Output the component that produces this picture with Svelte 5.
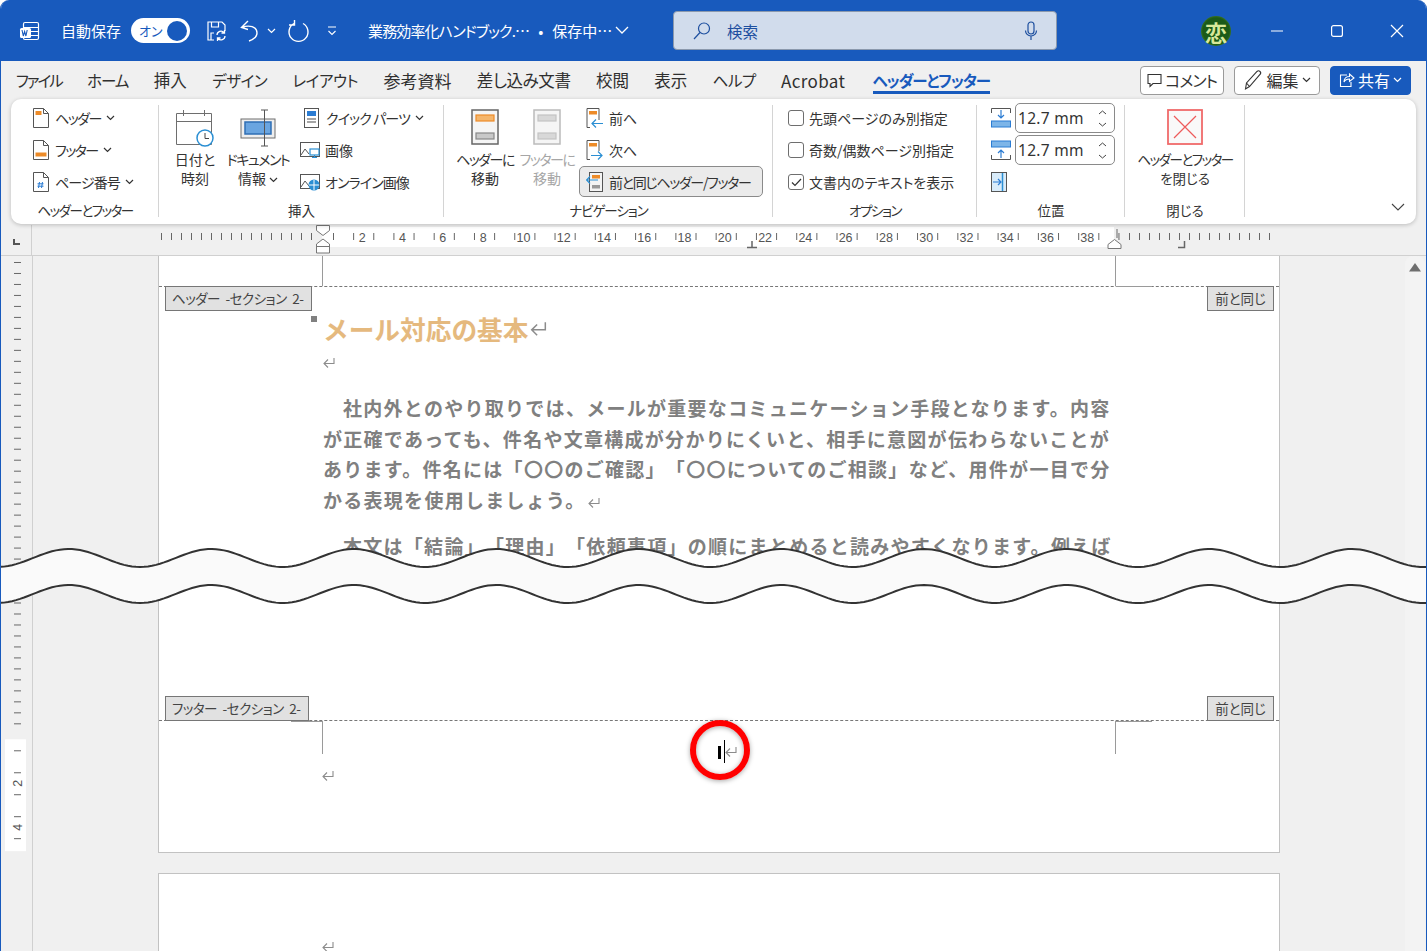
<script>
	// label, font size and tracking for each ribbon tab
	const tabs = [
		{ label: 'ファイル', size: 15.5, track: -2 },
		{ label: 'ホーム', size: 15.5, track: -1 },
		{ label: '挿入', size: 16.5, track: 0 },
		{ label: 'デザイン', size: 15.5, track: -0.5 },
		{ label: 'レイアウト', size: 15.5, track: -0.4 },
		{ label: '参考資料', size: 17, track: 0 },
		{ label: '差し込み文書', size: 16.5, track: -0.4 },
		{ label: '校閲', size: 16.5, track: 0 },
		{ label: '表示', size: 16.5, track: 0 },
		{ label: 'ヘルプ', size: 15.5, track: -0.5 },
		{ label: 'Acrobat', size: 17, track: 0.35 }
	];

	// horizontal ruler
	const greyTicks = [];
	for (let x = 160; x <= 312; x += 10) greyTicks.push(x);
	for (let x = 1128; x <= 1270; x += 10) greyTicks.push(x);
	const whiteTicks = [];
	for (let k = 0; k < 40; k++) whiteTicks.push(332.5 + k * 20.14);
	const numbers = [];
	for (let n = 2; n <= 38; n += 2) numbers.push(n);

	// vertical ruler
	const vTicks = [];
	for (let y = 6; y <= 473; y += 11) vTicks.push(y);
	const vWhiteTicks = [495, 517, 539, 561, 583];

	// wavy cut across the page
	function wave(base, from = 0, to = 1430) {
		let pts = [];
		for (let x = from; x <= to; x += 4) {
			const y = base + 9 * Math.cos(((x - 140) / 142.55) * 2 * Math.PI);
			pts.push(`${x} ${y.toFixed(2)}`);
		}
		return pts;
	}
	const top = wave(19);
	const bottom = wave(55);
	const bandPath = 'M' + top.join(' L') + ' L' + bottom.slice().reverse().join(' L') + ' Z';
	const topPath = 'M' + top.join(' L');
	const bottomPath = 'M' + bottom.join(' L');
</script>

{#snippet chev(cls = '')}
	<svg class="chev {cls}" width="9" height="6" viewBox="0 0 9 6"><path d="M1 1l3.500 3.500L8 1" fill="none" stroke="currentColor" stroke-width="1.200" /></svg>
{/snippet}

{#snippet ret()}
	<svg class="ret" viewBox="0 0 12 11"><path d="M11 1v5.500H1.500M5 2.500L1 6.500l4 4" fill="none" stroke="#8c8c8c" stroke-width="1.100" /></svg>
{/snippet}

<div class="window">
	<header class="titlebar">
		<svg class="word" width="22" height="22" viewBox="0 0 22 22">
			<path d="M6 2.500h12a1.500 1.500 0 0 1 1.500 1.500v14a1.500 1.500 0 0 1-1.500 1.500H6A1.500 1.500 0 0 1 4.500 18V4A1.500 1.500 0 0 1 6 2.500zM4.500 7.500h15M12 11.500h7.500M12 15.500h7.500" fill="none" stroke="#fff" stroke-width="1.200" />
			<rect x="1" y="8" width="11" height="10" rx="1.500" fill="#fff" />
			<path d="M3 10l1.300 6 1.300-4.500L6.900 16l1.300-6" fill="none" stroke="#185abd" stroke-width="1.100" />
		</svg>
		<span class="autosave">自動保存</span>
		<div class="toggle"><span>オン</span><i></i></div>
		<svg class="qat-save" width="22" height="22" viewBox="0 0 22 22" fill="none" stroke="#fff" stroke-width="1.200">
			<path d="M9 20H3V2h14l3 3v6M6.500 2v5h7V2M6 20v-7h3" />
			<path d="M12 15a4 4 0 0 1 7-2.500M20 16a4 4 0 0 1-7 2.500M19.500 10v3h-3M12.500 21v-3h3" stroke-width="1.300" />
		</svg>
		<svg class="qat-undo" width="22" height="24" viewBox="0 0 22 24" fill="none" stroke="#fff" stroke-width="1.400">
			<path d="M9 2L2.500 8.500 9 10.500M3 8.500c7-3 15-1 15 5.500 0 4-3.500 6.500-8 8" />
		</svg>
		<span class="undo-chev">{@render chev()}</span>
		<svg class="qat-redo" width="24" height="24" viewBox="0 0 24 24" fill="none" stroke="#fff" stroke-width="1.400">
			<path d="M8 4.500a9.500 9.500 0 1 0 9 0M8.500 1v5H3" />
		</svg>
		<svg class="qat-more" width="10" height="10" viewBox="0 0 10 10" fill="none" stroke="#fff" stroke-width="1.100">
			<path d="M1 1h8M1.500 5l3.500 3.500L8.500 5" />
		</svg>
		<div class="doc-title"><span class="doc-name">業務効率化ハンドブック.…</span><span>•</span><span>保存中…</span></div>
		<svg class="title-chev" width="14" height="9" viewBox="0 0 14 9"><path d="M1 1l6 6 6-6" fill="none" stroke="#fff" stroke-width="1.300" /></svg>
		<div class="search">
			<svg width="20" height="20" viewBox="0 0 20 20" fill="none" stroke="#1d4f9f" stroke-width="1.200"><circle cx="12" cy="7.500" r="5.500" /><path d="M8 11.500L2 18" /></svg>
			<span>検索</span>
			<svg class="mic" width="14" height="20" viewBox="0 0 14 20" fill="none" stroke="#1d4f9f" stroke-width="1.200"><rect x="4" y="1" width="6" height="12" rx="3" /><path d="M1.500 9.500a5.500 5.500 0 0 0 11 0M7 15v4" /></svg>
		</div>
		<div class="avatar">恋</div>
		<div class="winctl">
			<svg width="12" height="12" viewBox="0 0 12 12"><path d="M0 6h12" stroke="#fff" stroke-width="1.200" /></svg>
			<svg width="12" height="12" viewBox="0 0 12 12"><rect x="0.600" y="0.600" width="10.800" height="10.800" rx="2" fill="none" stroke="#fff" stroke-width="1.200" /></svg>
			<svg width="14" height="14" viewBox="0 0 14 14"><path d="M1 1l12 12M13 1L1 13" stroke="#fff" stroke-width="1.200" /></svg>
		</div>
	</header>

	<nav class="menubar">
		{#each tabs as tab}
			<span class="tab" style="font-size: {tab.size}px; letter-spacing: {tab.track}px">{tab.label}</span>
		{/each}
		<span class="tab active">ヘッダーとフッター</span>
		<div class="actions">
			<button class="act comment">
				<svg width="15" height="15" viewBox="0 0 15 15"><path d="M1 1.500h13v9H6l-3 3v-3H1z" fill="none" stroke="#333" stroke-width="1.100" /></svg>
				<span>コメント</span>
			</button>
			<button class="act edit">
				<svg width="20" height="22" viewBox="0 0 20 22" fill="none" stroke="#333" stroke-width="1.100"><path d="M2.500 20l1-6L14 2.500a2 2 0 0 1 3 3L6.500 17.500zM3.500 14l3 3.500" /></svg>
				編集
				{@render chev()}
			</button>
			<button class="act share">
				<svg width="16" height="16" viewBox="0 0 16 16" fill="none" stroke="#fff" stroke-width="1.100"><path d="M8 3H1.500v11.500H12V10M5 10c0-4 3-5.500 5.500-5.500V2L15 6l-4.500 3.500V7C8 7 6 8 5 10z" /></svg>
				共有
				{@render chev()}
			</button>
		</div>
	</nav>

	<section class="ribbon">
		<div class="group g-hf">
			<div class="group-body col">
				<div class="item">
					<svg width="16" height="20" viewBox="0 0 16 20"><path d="M.5.500h10l5 5v14H.5z" fill="#fff" stroke="#555" /><path d="M10.500.500v5h5" fill="none" stroke="#555" /><rect x="2.500" y="3" width="6" height="4" fill="#ed8b28" /></svg>
					<span class="tight">ヘッダー</span>{@render chev()}
				</div>
				<div class="item">
					<svg width="16" height="20" viewBox="0 0 16 20"><path d="M.5.500h10l5 5v14H.5z" fill="#fff" stroke="#555" /><path d="M10.500.500v5h5" fill="none" stroke="#555" /><rect x="2.500" y="12.500" width="11" height="4" fill="#ed8b28" /></svg>
					<span class="tight">フッター</span>{@render chev()}
				</div>
				<div class="item">
					<svg width="16" height="20" viewBox="0 0 16 20"><path d="M.5.500h10l5 5v14H.5z" fill="#fff" stroke="#555" /><path d="M10.500.500v5h5" fill="none" stroke="#555" /><path d="M6.500 10l-1 6M9.500 10l-1 6M4.500 11.800h6M4.500 14.200h6" stroke="#2b7cd3" stroke-width="1" /></svg>
					<span class="snug">ページ番号</span>{@render chev()}
				</div>
			</div>
			<div class="group-label tight">ヘッダーとフッター</div>
		</div>

		<div class="group g-insert">
			<div class="group-body row">
				<div class="big date">
					<svg width="38" height="38" viewBox="0 0 38 38" fill="none" stroke="#6e6e6e">
						<path d="M.5 4.500h35v31H.5zM.5 12.500h35M7.500 1v6M28.500 1v6" />
						<circle cx="29" cy="29" r="8" fill="#fff" stroke="#2b8fd3" stroke-width="1.500" />
						<path d="M29 24v5.500h4" stroke="#444" />
					</svg>
					<span>日付と<br />時刻</span>
				</div>
				<div class="big docinfo">
					<svg width="36" height="38" viewBox="0 0 36 38" fill="none" stroke="#6e6e6e">
						<rect x="1" y="10" width="34" height="19" fill="#eee" />
						<rect x="5" y="13" width="26" height="12" fill="#6aa5e0" stroke="#2f6fb5" stroke-width="1.500" />
						<path d="M21 1h7M21 37h7M24.500 1v36" stroke="#555" />
					</svg>
					<span><b class="tight">ドキュメント</b><br />情報 {@render chev()}</span>
				</div>
				<div class="col small-col">
					<div class="item">
						<svg width="16" height="20" viewBox="0 0 16 20"><rect x=".5" y=".5" width="14" height="19" fill="#fff" stroke="#555" /><rect x="3" y="3" width="9" height="5" fill="#2b7cd3" /><path d="M3 11h9M3 14h9" stroke="#888" stroke-width="1.500" /></svg>
						<span class="snug">クイック パーツ</span>{@render chev()}
					</div>
					<div class="item wide">
						<svg width="20" height="16" viewBox="0 0 20 16" fill="none"><rect x=".5" y=".5" width="19" height="14" stroke="#555" /><path d="M1 13l4-6 4 5" stroke="#555" /><rect x="10" y="7" width="9" height="6" fill="#fff" stroke="#2b8fd3" stroke-width="1.200" /><path d="M14.500 13v2.500M12 15.500h5" stroke="#2b8fd3" /></svg>
						<span>画像</span>
					</div>
					<div class="item wide">
						<svg width="20" height="17" viewBox="0 0 20 17" fill="none"><rect x=".5" y=".5" width="19" height="14" stroke="#555" /><path d="M1 13l4-6 4 5" stroke="#555" /><circle cx="14" cy="11" r="5.500" fill="#2b8fd3" /><path d="M9 11h10M14 6v10" stroke="#fff" /></svg>
						<span class="snug">オンライン画像</span>
					</div>
				</div>
			</div>
			<div class="group-label">挿入</div>
		</div>

		<div class="group g-nav">
			<div class="group-body row">
				<div class="big gotohead">
					<svg width="28" height="36" viewBox="0 0 28 36"><rect x="1" y="1" width="26" height="34" fill="#f5f5f5" stroke="#666" stroke-width="1.500" /><rect x="5" y="6" width="18" height="6" fill="#f5b66c" stroke="#ed8b28" stroke-width="1.200" /><rect x="5" y="24" width="18" height="6" fill="#c8c8c8" stroke="#888" stroke-width="1.200" /></svg>
					<span><b class="tight">ヘッダーに</b><br />移動</span>
				</div>
				<div class="big gotofoot disabled">
					<svg width="28" height="36" viewBox="0 0 28 36"><rect x="1" y="1" width="26" height="34" fill="#f5f5f5" stroke="#bbb" stroke-width="1.500" /><rect x="5" y="6" width="18" height="6" fill="#d8d8d8" stroke="#c4c4c4" stroke-width="1.200" /><rect x="5" y="24" width="18" height="6" fill="#d8d8d8" stroke="#c4c4c4" stroke-width="1.200" /></svg>
					<span><b class="tight">フッターに</b><br />移動</span>
				</div>
				<div class="col nav-col">
					<div class="item">
						<svg width="17" height="20" viewBox="0 0 17 20" fill="none"><path d="M13 12V.5H1v19h3" stroke="#555" /><rect x="3" y="3" width="8" height="3.500" fill="#ed8b28" /><path d="M17 15.500H6M10 11.500l-4 4 4 4" stroke="#2b8fd3" stroke-width="1.200" /></svg>
						<span>前へ</span>
					</div>
					<div class="item">
						<svg width="17" height="20" viewBox="0 0 17 20" fill="none"><path d="M13 11V.5H1v19h3" stroke="#555" /><rect x="3" y="3" width="8" height="3.500" fill="#ed8b28" /><path d="M5 15.500h11M12 11.500l4 4-4 4" stroke="#2b8fd3" stroke-width="1.200" /></svg>
						<span>次へ</span>
					</div>
					<div class="item linked">
						<svg width="17" height="20" viewBox="0 0 17 20" fill="none"><rect x="3.500" y=".5" width="13" height="19" fill="#f4f4f4" stroke="#555" /><rect x="6" y="3" width="8" height="3.500" fill="#ed8b28" /><rect x="6" y="13" width="8" height="3.500" fill="#999" /><path d="M12 8H1M4 4.500L.5 8 4 11.500" stroke="#2b8fd3" stroke-width="1.200" /></svg>
						<span class="tight-mid">前と同じヘッダー/フッター</span>
					</div>
				</div>
			</div>
			<div class="group-label snug-mid">ナビゲーション</div>
		</div>

		<div class="group g-opt">
			<div class="group-body col">
				<label class="check"><i></i><span>先頭ページのみ別指定</span></label>
				<label class="check"><i></i><span>奇数/偶数ページ別指定</span></label>
				<label class="check"><i class="on"><svg width="11" height="9" viewBox="0 0 11 9"><path d="M1 4.500l3 3 6-6.500" fill="none" stroke="#333" stroke-width="1.200" /></svg></i><span>文書内のテキストを表示</span></label>
			</div>
			<div class="group-label tight">オプション</div>
		</div>

		<div class="group g-pos">
			<div class="group-body col">
				<div class="spin-row">
					<svg width="20" height="20" viewBox="0 0 20 20" fill="none"><path d="M.5 5V.5h19V5" stroke="#555" /><path d="M10 2v8M7 7l3 3 3-3" stroke="#2b7cd3" stroke-width="1.200" /><rect x=".5" y="13" width="19" height="6" fill="#7db5e8" stroke="#2b7cd3" /></svg>
					<div class="spin"><span>12.7 mm</span><em><svg width="9" height="5" viewBox="0 0 9 5"><path d="M1 4l3.500-3L8 4" fill="none" stroke="#444" /></svg><svg width="9" height="5" viewBox="0 0 9 5"><path d="M1 1l3.500 3L8 1" fill="none" stroke="#444" /></svg></em></div>
				</div>
				<div class="spin-row">
					<svg width="20" height="20" viewBox="0 0 20 20" fill="none"><rect x=".5" y="1" width="19" height="6" fill="#7db5e8" stroke="#2b7cd3" /><path d="M10 18v-8M7 13l3-3 3 3" stroke="#2b7cd3" stroke-width="1.200" /><path d="M.5 15v4.500h19V15" stroke="#555" /></svg>
					<div class="spin"><span>12.7 mm</span><em><svg width="9" height="5" viewBox="0 0 9 5"><path d="M1 4l3.500-3L8 4" fill="none" stroke="#444" /></svg><svg width="9" height="5" viewBox="0 0 9 5"><path d="M1 1l3.500 3L8 1" fill="none" stroke="#444" /></svg></em></div>
				</div>
				<div class="spin-row">
					<svg width="16" height="20" viewBox="0 0 16 20" fill="none"><rect x=".5" y=".5" width="15" height="19" fill="#d9ecfa" stroke="#555" /><path d="M11.500 1v18" stroke="#2b8fd3" stroke-width="1.500" /><path d="M2 10h8M7 7l3 3-3 3" stroke="#2b7cd3" stroke-width="1.200" /></svg>
				</div>
			</div>
			<div class="group-label">位置</div>
		</div>

		<div class="group g-close">
			<div class="group-body">
				<div class="big close-big">
					<svg width="36" height="36" viewBox="0 0 36 36"><rect x="1" y="1" width="34" height="34" fill="#f9f9f9" stroke="#f06a6a" stroke-width="1.800" /><path d="M7 7l22 22M29 7L7 29" stroke="#ee5b5b" stroke-width="1.200" /></svg>
					<span><b class="tight">ヘッダーとフッター</b><br />を閉じる</span>
				</div>
			</div>
			<div class="group-label">閉じる</div>
		</div>

		<svg class="collapse" width="14" height="8" viewBox="0 0 14 8"><path d="M1 1l6 6 6-6" fill="none" stroke="#444" stroke-width="1.100" /></svg>
	</section>

	<svg class="hruler" width="1425" height="30" viewBox="0 0 1425 30">
		<rect x="321" y="2" width="792" height="20" fill="#fff" />
		<path d="M30.500 0v30" stroke="#d0d0d0" />
		<path d="M12 14v6h7v-2h-5v-4z" fill="#555" />
		{#each greyTicks as x}
			<path d="M{x}.5 8v7" stroke="#666" />
		{/each}
		{#each whiteTicks as x}
			<path d="M{x} 8v7" stroke="#666" />
		{/each}
		{#each numbers as n}
			<text x={321 + n * 20.14} y="16.500" text-anchor="middle" class="rnum">{n}</text>
		{/each}
		<path d="M315.500 .5h13v5l-6.500 5-6.500-5z" fill="#fff" stroke="#777" />
		<path d="M315.500 28v-9l6.500-5 6.500 5v9zM315.500 21.500h13" fill="#fff" stroke="#777" />
		<path d="M1107 23.500v-4l6.500-5 6.500 5v4z" fill="#fff" stroke="#777" />
		<path d="M1116 4v9" stroke="#666" />
		<path d="M746 22.500h10M751 16v6" stroke="#666" stroke-width="1.500" />
		<path d="M1177 22.500h6.500V16" fill="none" stroke="#666" stroke-width="1.500" />
	</svg>

	<div class="workspace">
		<svg class="vruler" width="31" height="696" viewBox="0 0 31 696">
			<rect x="4" y="484" width="21" height="112" fill="#fff" />
			{#each vTicks as y}
				<path d="M13 {y}.5h7" stroke="#666" />
			{/each}
			{#each vWhiteTicks as y}
				<path d="M13 {y}.5h7" stroke="#666" />
			{/each}
			<text class="rnum" transform="translate(21 528) rotate(-90)" text-anchor="middle">2</text>
			<text class="rnum" transform="translate(21 572) rotate(-90)" text-anchor="middle">4</text>
		</svg>

		<div class="pages">
			<article class="page first">
				<div class="head-zone">
					<span class="crop left"></span>
					<span class="crop right"></span>
				</div>
				<div class="zone-tag head-tag">ヘッダー -セクション 2-</div>
				<div class="zone-tag same head-same">前と同じ</div>
				<div class="content">
					<h1><span class="anchor"></span>メール対応の基本{@render ret()}</h1>
					<div class="empty-line">{@render ret()}</div>
					<p>社内外とのやり取りでは、メールが重要なコミュニケーション手段となります。内容が正確であっても、件名や文章構成が分かりにくいと、相手に意図が伝わらないことがあります。件名には「〇〇のご確認」「〇〇についてのご相談」など、用件が一目で分かる表現を使用しましょう。{@render ret()}</p>
					<p>本文は「結論」「理由」「依頼事項」の順にまとめると読みやすくなります。例えば</p>
				</div>
				<div class="foot-zone">
					<span class="crop left"></span>
					<span class="crop right"></span>
					<div class="zone-tag foot-tag">フッター -セクション 2-</div>
					<div class="zone-tag same foot-same">前と同じ</div>
					<div class="foot-center"><span class="beam"></span><span class="caret"></span>{@render ret()}</div>
					<div class="foot-left">{@render ret()}</div>
				</div>
			</article>

			<article class="page second">
				<div class="second-line">{@render ret()}</div>
			</article>
		</div>

		<div class="scrollbar">
			<svg width="12" height="9" viewBox="0 0 12 9"><path d="M6 0l6 8.500H0z" fill="#6e6e6e" /></svg>
		</div>
	</div>

	<svg class="wave" width="1427" height="80" viewBox="0 0 1427 80">
		<path d={bandPath} fill="#fafafa" />
		<path d={topPath} fill="none" stroke="#333" stroke-width="2" />
		<path d={bottomPath} fill="none" stroke="#333" stroke-width="2" />
	</svg>

	<div class="marker"></div>
</div>

<style>
	:global(body) {
		margin: 0;
		background: #fff;
		overflow: hidden;
	}

	.window {
		position: relative;
		width: 1427px;
		height: 951px;
		box-sizing: border-box;
		border-left: 1px solid #185abd;
		border-right: 1px solid #185abd;
		background: #f0f0f0;
		border-radius: 9px 9px 0 0;
		overflow: hidden;
		display: flex;
		flex-direction: column;
		font-family: 'Noto Sans CJK JP', 'Noto Sans', sans-serif;
		font-feature-settings: 'palt';
		color: #333;
	}

	.titlebar {
		flex: none;
		height: 61px;
		margin: 0 -1px;
		background: #185abd;
		color: #fff;
		display: flex;
		align-items: center;
		font-size: 15px;
	}

	.word {
		margin-left: 19px;
	}

	.autosave {
		margin-left: 20px;
		width: 70px;
	}

	.toggle {
		box-sizing: border-box;
		width: 59px;
		height: 25px;
		border-radius: 13px;
		background: #fff;
		color: #185abd;
		display: flex;
		align-items: center;
		justify-content: space-between;
		padding: 0 2px 0 8px;
		font-size: 13px;
	}

	.toggle i {
		width: 20px;
		height: 20px;
		border-radius: 50%;
		background: #185abd;
		margin-right: 1px;
	}

	.qat-save {
		margin-left: 15px;
	}

	.qat-undo {
		margin-left: 12px;
	}

	.undo-chev {
		margin-left: 6px;
		display: flex;
	}

	.qat-redo {
		margin-left: 10px;
	}

	.qat-more {
		margin-left: 17px;
	}

	.doc-title {
		margin-left: 31px;
		width: 245px;
		white-space: nowrap;
		font-size: 15px;
		display: flex;
		gap: 9px;
	}

	.doc-name {
		letter-spacing: -0.850px;
	}

	.title-chev {
		margin-left: 2px;
	}

	.search {
		box-sizing: border-box;
		margin-left: 44px;
		width: 384px;
		height: 39px;
		background: #d1dcec;
		border: 1px solid #8b99ad;
		border-radius: 4px;
		display: flex;
		align-items: center;
		padding: 0 18px;
		color: #1d4f9f;
		font-size: 15.500px;
		gap: 15px;
	}

	.search .mic {
		margin-left: auto;
	}

	.avatar {
		margin-left: 144px;
		width: 30px;
		height: 30px;
		border-radius: 50%;
		background: radial-gradient(circle, #1c5a18 62%, #93c02e 100%);
		color: #d8e89a;
		font-size: 22px;
		font-weight: 700;
		line-height: 30px;
		text-align: center;
		flex: none;
	}

	.winctl {
		margin-left: 40px;
		display: flex;
		align-items: center;
		gap: 47.500px;
		width: 140px;
		flex: none;
	}

	.menubar {
		flex: none;
		height: 38px;
		display: flex;
		align-items: center;
		padding-left: 15px;
		gap: 25.400px;
		font-size: 16px;
		position: relative;
	}

	.tab {
		white-space: nowrap;
		color: #2f2f2f;
		position: relative;
	}

	.tab.active {
		color: #185abd;
		font-weight: 700;
		font-size: 15.500px;
		letter-spacing: -1.100px;
		margin-left: 2px;
	}

	.tab.active::after {
		content: '';
		position: absolute;
		left: 0;
		right: 0;
		bottom: -3px;
		height: 3px;
		background: #185abd;
	}

	.actions {
		margin-left: auto;
		margin-right: 15px;
		display: flex;
		gap: 10px;
		align-items: center;
	}

	.act {
		box-sizing: border-box;
		height: 29px;
		border: 1px solid #9a9a9a;
		border-radius: 4px;
		background: #fff;
		color: #333;
		font: inherit;
		font-size: 16px;
		font-feature-settings: 'palt';
		display: flex;
		align-items: center;
		justify-content: center;
		gap: 3px;
		padding: 0;
	}

	.comment span {
		letter-spacing: -1px;
	}

	.comment {
		width: 84px;
	}

	.edit {
		width: 86px;
	}

	.share {
		width: 81px;
		background: #185abd;
		border-color: #185abd;
		color: #fff;
	}

	.ribbon {
		flex: none;
		position: relative;
		height: 125px;
		margin: 0 10px;
		background: #fff;
		border-radius: 10px;
		box-shadow: 0 1px 4px rgba(0, 0, 0, 0.22);
		display: flex;
		font-size: 14px;
		color: #333;
		z-index: 1;
	}

	.group {
		box-sizing: border-box;
		position: relative;
		height: 118px;
		margin-top: 3px;
		display: flex;
		flex-direction: column;
	}

	.group::after {
		content: '';
		position: absolute;
		right: 0;
		top: 3px;
		height: 112px;
		width: 1px;
		background: #d4d4d4;
	}

	.group-body {
		height: 98px;
		box-sizing: border-box;
	}

	.group-label {
		text-align: center;
		font-size: 13.500px;
		line-height: 20px;
	}

	.tight {
		letter-spacing: -1.500px;
		font-weight: 400;
	}

	.tight-mid {
		letter-spacing: -1.300px;
	}

	.snug {
		letter-spacing: -0.900px;
	}

	.snug-mid {
		letter-spacing: -1.100px;
	}

	.col {
		display: flex;
		flex-direction: column;
		gap: 0;
	}

	.row {
		display: flex;
	}

	.g-hf {
		width: 148px;
	}

	.g-hf .col {
		padding: 0 0 0 22px;
	}

	.g-insert {
		width: 285px;
	}

	.g-nav {
		width: 329px;
	}

	.g-opt {
		width: 204px;
	}

	.g-opt .col {
		padding-left: 15px;
	}

	.g-pos {
		width: 148px;
	}

	.g-pos .col {
		padding-left: 14px;
	}

	.g-close {
		width: 120px;
	}

	.item {
		height: 32px;
		display: flex;
		align-items: center;
		white-space: nowrap;
	}

	.item > svg {
		flex: none;
	}

	.item > span {
		margin-left: 6px;
		margin-right: 5px;
	}

	.big {
		display: flex;
		flex-direction: column;
		align-items: center;
		text-align: center;
		white-space: nowrap;
		line-height: 19px;
	}

	.big svg:first-child {
		margin-top: 7px;
		flex: none;
	}

	.big span {
		margin-top: 3px;
	}

	.big.date {
		width: 62px;
		margin-left: 5px;
	}

	.big.docinfo {
		width: 64px;
	}

	.small-col {
		margin-left: 10px;
	}

	.small-col .item > span {
		margin-left: 5px;
	}

	.small-col .item:first-child {
		margin-left: 4px;
	}

	.small-col .item:first-child > span {
		margin-left: 6px;
	}

	.big.gotohead {
		width: 62px;
		margin-left: 10px;
	}

	.big.gotofoot {
		width: 62px;
	}

	.gotohead span,
	.gotofoot span {
		margin-top: 5px;
	}

	.disabled {
		color: #a6a6a6;
	}

	.nav-col {
		margin-left: 0;
		padding-left: 8px;
		position: relative;
	}

	.item.linked {
		box-sizing: border-box;
		width: 184px;
		height: 31px;
		margin: 0 0 0 -7px;
		padding-left: 6px;
		background: #ebebeb;
		border: 1px solid #8a8a8a;
		border-radius: 5px;
	}

	.check {
		height: 32px;
		display: flex;
		align-items: center;
		gap: 5px;
		white-space: nowrap;
	}

	.check i {
		box-sizing: border-box;
		width: 16px;
		height: 16px;
		border: 1px solid #6e6e6e;
		border-radius: 3px;
		display: flex;
		align-items: center;
		justify-content: center;
	}

	.spin-row {
		height: 32px;
		display: flex;
		align-items: center;
		gap: 4px;
	}

	.spin {
		box-sizing: border-box;
		width: 100px;
		height: 30px;
		border: 1px solid #8a8a8a;
		border-radius: 5px;
		display: flex;
		align-items: center;
		justify-content: space-between;
		padding: 0 7px 0 2px;
		font-family: 'Noto Sans', sans-serif;
		font-size: 15.500px;
		letter-spacing: 0.300px;
	}

	.spin em {
		display: flex;
		flex-direction: column;
		gap: 7px;
	}

	.spin em svg {
		display: block;
	}

	.big.close-big {
		width: 120px;
		font-size: 13.500px;
	}

	.close-big span {
		margin-top: 5px;
	}

	.collapse {
		position: absolute;
		right: 11px;
		bottom: 13px;
	}

	.chev {
		flex: none;
		vertical-align: middle;
	}

	.hruler {
		flex: none;
		display: block;
		height: 30px;
		border-bottom: 1px solid #d0d0d0;
		box-sizing: content-box;
		margin-top: 1px;
		position: relative;
	}

	.rnum {
		font-family: 'Liberation Sans', sans-serif;
		font-size: 12.500px;
		fill: #555;
	}

	.workspace {
		flex: 1;
		min-height: 0;
		display: flex;
		position: relative;
	}

	.vruler {
		flex: none;
		border-right: 1px solid #d0d0d0;
		height: 100%;
	}

	.pages {
		flex: none;
		width: 1122px;
		margin-left: 125px;
	}

	.page {
		box-sizing: border-box;
		position: relative;
		background: #fff;
		border: 1px solid #c2c2c2;
	}

	.first {
		height: 597px;
		border-top: none;
		display: flex;
		flex-direction: column;
	}

	.second {
		height: 200px;
		margin-top: 20px;
	}

	.second-line {
		display: flex;
		padding: 67px 0 0 163px;
	}

	.head-zone {
		position: relative;
		height: 30px;
		flex: none;
		border-bottom: 1px dashed #777;
	}

	.crop {
		position: absolute;
		width: 0;
		height: 30px;
		border-left: 1px solid #9a9a9a;
		top: 0;
	}

	.crop.left {
		left: 163px;
	}

	.crop.right {
		left: 956px;
	}

	.head-zone .crop.right::after {
		content: '';
		position: absolute;
		left: 0;
		bottom: -1px;
		width: 36px;
		border-bottom: 1px solid #9a9a9a;
	}

	.zone-tag {
		position: absolute;
		box-sizing: border-box;
		height: 25px;
		background: #e1e1e1;
		border: 1px solid #767676;
		font-size: 13.500px;
		letter-spacing: -0.500px;
		word-spacing: 3px;
		line-height: 23px;
		color: #444;
		padding: 0 0 0 6px;
		white-space: pre;
	}

	.head-tag {
		top: 30px;
		left: 6px;
		width: 147px;
	}

	.head-same {
		top: 30px;
		right: 5px;
	}

	.same {
		width: 67px;
		text-align: center;
		padding: 0;
		letter-spacing: 0;
	}

	.content {
		position: relative;
		padding: 23px 0 0 164px;
	}

	h1 {
		position: relative;
		margin: 0;
		font-size: 25.700px;
		font-weight: 700;
		line-height: 37px;
		color: #e5b97e;
		font-feature-settings: normal;
		display: flex;
		align-items: center;
	}

	h1 .ret {
		width: 17px;
		height: 15px;
		margin-left: 1px;
	}

	.anchor {
		position: absolute;
		left: -12px;
		top: 6px;
		width: 6px;
		height: 6px;
		background: #808080;
	}

	.empty-line {
		height: 29px;
		margin-top: 1px;
		display: flex;
		align-items: center;
	}

	p {
		margin: 16px 0 0;
		width: 792px;
		font-size: 19px;
		font-weight: 700;
		letter-spacing: 1.280px;
		line-height: 30.500px;
		text-indent: 20px;
		color: #808080;
		font-feature-settings: normal;
		text-spacing-trim: space-all;
	}

	p + p {
		margin-top: 16px;
	}

	p .ret {
		margin-left: 2px;
	}

	.foot-zone {
		position: relative;
		margin-top: auto;
		height: 131px;
		flex: none;
		border-top: 1px dashed #777;
	}

	.foot-zone .crop {
		height: 33px;
	}

	.foot-zone .crop.left::before,
	.foot-zone .crop.right::before {
		content: '';
		position: absolute;
		top: 0;
		height: 0;
		border-top: 1px solid #9a9a9a;
	}

	.foot-zone .crop.left::before {
		left: -32px;
		width: 32px;
	}

	.foot-zone .crop.right::before {
		left: 0;
		width: 36px;
	}

	.foot-tag {
		top: -25px;
		left: 6px;
		width: 144px;
	}

	.foot-same {
		top: -25px;
		right: 5px;
	}

	.foot-center {
		position: absolute;
		left: 559px;
		top: 19px;
		height: 23px;
		display: flex;
		align-items: center;
	}

	.beam {
		width: 3px;
		height: 13px;
		background: #000;
		margin-right: 3px;
		margin-top: 2px;
	}

	.caret {
		width: 1px;
		height: 23px;
		background: #000;
		margin-right: 0;
	}

	.foot-left {
		position: absolute;
		left: 163px;
		top: 49px;
		display: flex;
	}

	.ret {
		display: inline-block;
		vertical-align: baseline;
		width: 12px;
		height: 11px;
	}

	.scrollbar {
		flex: none;
		width: 20px;
		margin-left: 125px;
		background: #f3f3f3;
		border-radius: 8px 8px 0 0;
		display: flex;
		justify-content: center;
		padding-top: 7px;
		box-sizing: border-box;
	}

	.scrollbar svg {
		flex: none;
	}

	.wave {
		position: absolute;
		left: -1px;
		top: 539px;
		z-index: 2;
	}

	.marker {
		position: absolute;
		left: 689px;
		top: 720px;
		width: 48px;
		height: 48px;
		border: 6px solid #ff0000;
		border-radius: 50%;
		box-shadow: 0 1px 5px rgba(0, 0, 0, 0.35), inset 0 1px 5px rgba(0, 0, 0, 0.35);
		z-index: 3;
	}
</style>
